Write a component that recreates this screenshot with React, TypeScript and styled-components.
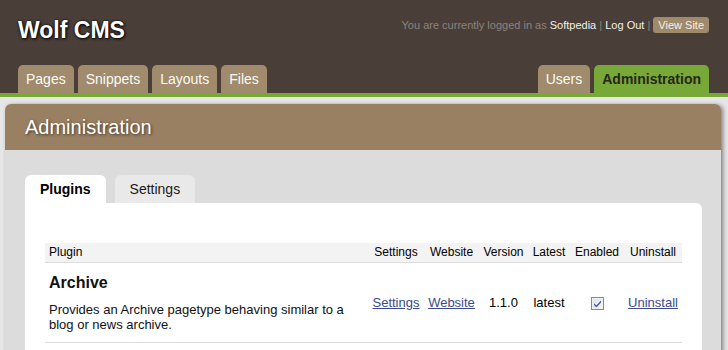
import React from 'react';
import styled, { createGlobalStyle } from 'styled-components';

const GlobalStyle = createGlobalStyle`
  html, body { margin: 0; padding: 0; }
  body {
    background: #e6e6e6;
    font-family: "Liberation Sans", Arial, Helvetica, sans-serif;
    color: #000;
  }
`;

const Header = styled.header`
  height: 93px;
  background: #4a3e38;
  padding: 0 19px 0 18px;
  display: flex;
  flex-direction: column;
  justify-content: space-between;
  border-bottom: 4px solid #78a838;
`;

const TopRow = styled.div`
  display: flex;
  justify-content: space-between;
  align-items: flex-start;
  padding-top: 17px;
`;

const Logo = styled.h1`
  margin: 0;
  font-size: 23px;
  line-height: 27px;
  font-weight: bold;
  color: #ffffff;
  text-shadow: 1px 1px 3px #000, 0 0 2px #000;
`;

const UserInfo = styled.div`
  font-size: 11px;
  line-height: 16px;
  height: 16px;
  color: #8c837d;
  white-space: nowrap;
`;

const UserLink = styled.a`
  color: #f4f1ec;
  text-decoration: none;
`;

const ViewSite = styled.a`
  display: inline-block;
  vertical-align: top;
  line-height: 14px;
  padding: 1px 5px;
  border-radius: 3px;
  background: #a08a6c;
  color: #f4f1ec;
  text-decoration: none;
`;

const Nav = styled.nav`
  display: flex;
  justify-content: space-between;
  align-items: flex-end;
`;

const TabGroup = styled.div`
  display: flex;
  gap: 4px;
`;

const NavTab = styled.a<{ $active?: boolean }>`
  height: 28px;
  line-height: 28px;
  padding: 0 8px;
  font-size: 14px;
  border-radius: 5px 5px 0 0;
  text-decoration: none;
  background: ${(p) => (p.$active ? '#78a838' : '#a08b6c')};
  color: ${(p) => (p.$active ? '#262619' : '#fbfaf7')};
  font-weight: ${(p) => (p.$active ? 'bold' : 'normal')};
`;

const Panel = styled.main`
  margin: 7px 7px 0 5px;
  border-radius: 6px 6px 0 0;
  box-shadow: 2px 1px 4px rgba(0, 0, 0, 0.45);
  background: #dcdcdc;
`;

const PanelHeader = styled.div`
  height: 46px;
  display: flex;
  align-items: center;
  padding: 0 20px;
  background: #998062;
  border-radius: 6px 6px 0 0;
`;

const PanelTitle = styled.h2`
  margin: 0;
  font-size: 20px;
  font-weight: normal;
  line-height: 24px;
  color: #ffffff;
  text-shadow: 1px 1px 3px rgba(0, 0, 0, 0.6);
`;

const PanelBody = styled.div`
  padding: 25px 19px 0 20px;
`;

const InnerTabs = styled.div`
  display: flex;
  gap: 9px;
`;

const InnerTab = styled.a<{ $active?: boolean }>`
  height: 28px;
  line-height: 28px;
  padding: 0 15px;
  font-size: 14px;
  border-radius: 6px 6px 0 0;
  text-decoration: none;
  background: ${(p) => (p.$active ? '#ffffff' : '#e9e9e9')};
  color: ${(p) => (p.$active ? '#000' : '#1a1a1a')};
  font-weight: ${(p) => (p.$active ? 'bold' : 'normal')};
`;

const Content = styled.section`
  background: #ffffff;
  border-radius: 0 6px 0 0;
  padding: 40px 20px 20px;
`;

const Table = styled.table`
  width: 100%;
  border-collapse: collapse;
  table-layout: fixed;
`;

const Th = styled.th<{ $left?: boolean }>`
  height: 19px;
  line-height: 19px;
  padding: 0 4px;
  font-size: 12px;
  font-weight: normal;
  background: #f3f3f3;
  border-bottom: 1px solid #dddddd;
  text-align: ${(p) => (p.$left ? 'left' : 'center')};
  white-space: nowrap;
`;

const Td = styled.td<{ $left?: boolean }>`
  padding: 10px 4px 10px;
  font-size: 13px;
  vertical-align: middle;
  border-bottom: 1px solid #dddddd;
  text-align: ${(p) => (p.$left ? 'left' : 'center')};
  white-space: ${(p) => (p.$left ? 'normal' : 'nowrap')};
`;

const PluginName = styled.h4`
  margin: 1px 0 10px;
  font-size: 16px;
  line-height: 18px;
  font-weight: bold;
  color: #111;
`;

const PluginDesc = styled.p`
  margin: 0;
  font-size: 13px;
  line-height: 15px;
  color: #111;
`;

const TableLink = styled.a`
  color: #3b4b8b;
  text-decoration: underline;
`;

const CheckBox = styled.span`
  display: inline-block;
  vertical-align: middle;
  width: 11px;
  height: 11px;
  border: 1px solid #8a8a8a;
  background: linear-gradient(135deg, #dcdfe6, #f6f7f9);
  box-shadow: inset 0 0 0 1px #f0f0f0;
  position: relative;
  svg {
    position: absolute;
    left: 1px;
    top: 1px;
  }
`;

const colWidths = [323, 56, 55, 49, 42, 54, 58];

export default function App() {
  return (
    <>
      <GlobalStyle />
      <Header>
        <TopRow>
          <Logo>Wolf CMS</Logo>
          <UserInfo>
            You are currently logged in as <UserLink href="#">Softpedia</UserLink> |{' '}
            <UserLink href="#">Log Out</UserLink> | <ViewSite href="#">View Site</ViewSite>
          </UserInfo>
        </TopRow>
        <Nav>
          <TabGroup>
            <NavTab href="#">Pages</NavTab>
            <NavTab href="#">Snippets</NavTab>
            <NavTab href="#">Layouts</NavTab>
            <NavTab href="#">Files</NavTab>
          </TabGroup>
          <TabGroup>
            <NavTab href="#">Users</NavTab>
            <NavTab href="#" $active>
              Administration
            </NavTab>
          </TabGroup>
        </Nav>
      </Header>
      <Panel>
        <PanelHeader>
          <PanelTitle>Administration</PanelTitle>
        </PanelHeader>
        <PanelBody>
          <InnerTabs>
            <InnerTab href="#" $active>
              Plugins
            </InnerTab>
            <InnerTab href="#">Settings</InnerTab>
          </InnerTabs>
          <Content>
            <Table>
              <colgroup>
                {colWidths.map((w, i) => (
                  <col key={i} style={{ width: w }} />
                ))}
              </colgroup>
              <thead>
                <tr>
                  <Th $left>Plugin</Th>
                  <Th>Settings</Th>
                  <Th>Website</Th>
                  <Th>Version</Th>
                  <Th>Latest</Th>
                  <Th>Enabled</Th>
                  <Th>Uninstall</Th>
                </tr>
              </thead>
              <tbody>
                <tr>
                  <Td $left>
                    <PluginName>Archive</PluginName>
                    <PluginDesc>
                      Provides an Archive pagetype behaving similar to a blog or news archive.
                    </PluginDesc>
                  </Td>
                  <Td>
                    <TableLink href="#">Settings</TableLink>
                  </Td>
                  <Td>
                    <TableLink href="#">Website</TableLink>
                  </Td>
                  <Td>1.1.0</Td>
                  <Td>latest</Td>
                  <Td>
                    <CheckBox role="checkbox" aria-checked="true">
                      <svg width="9" height="9" viewBox="0 0 9 9">
                        <path d="M1 4.2 L3.4 6.6 L8 1.6 L8 3.6 L3.4 8.4 L1 6 Z" fill="#4458a0" />
                      </svg>
                    </CheckBox>
                  </Td>
                  <Td>
                    <TableLink href="#">Uninstall</TableLink>
                  </Td>
                </tr>
              </tbody>
            </Table>
          </Content>
        </PanelBody>
      </Panel>
    </>
  );
}
